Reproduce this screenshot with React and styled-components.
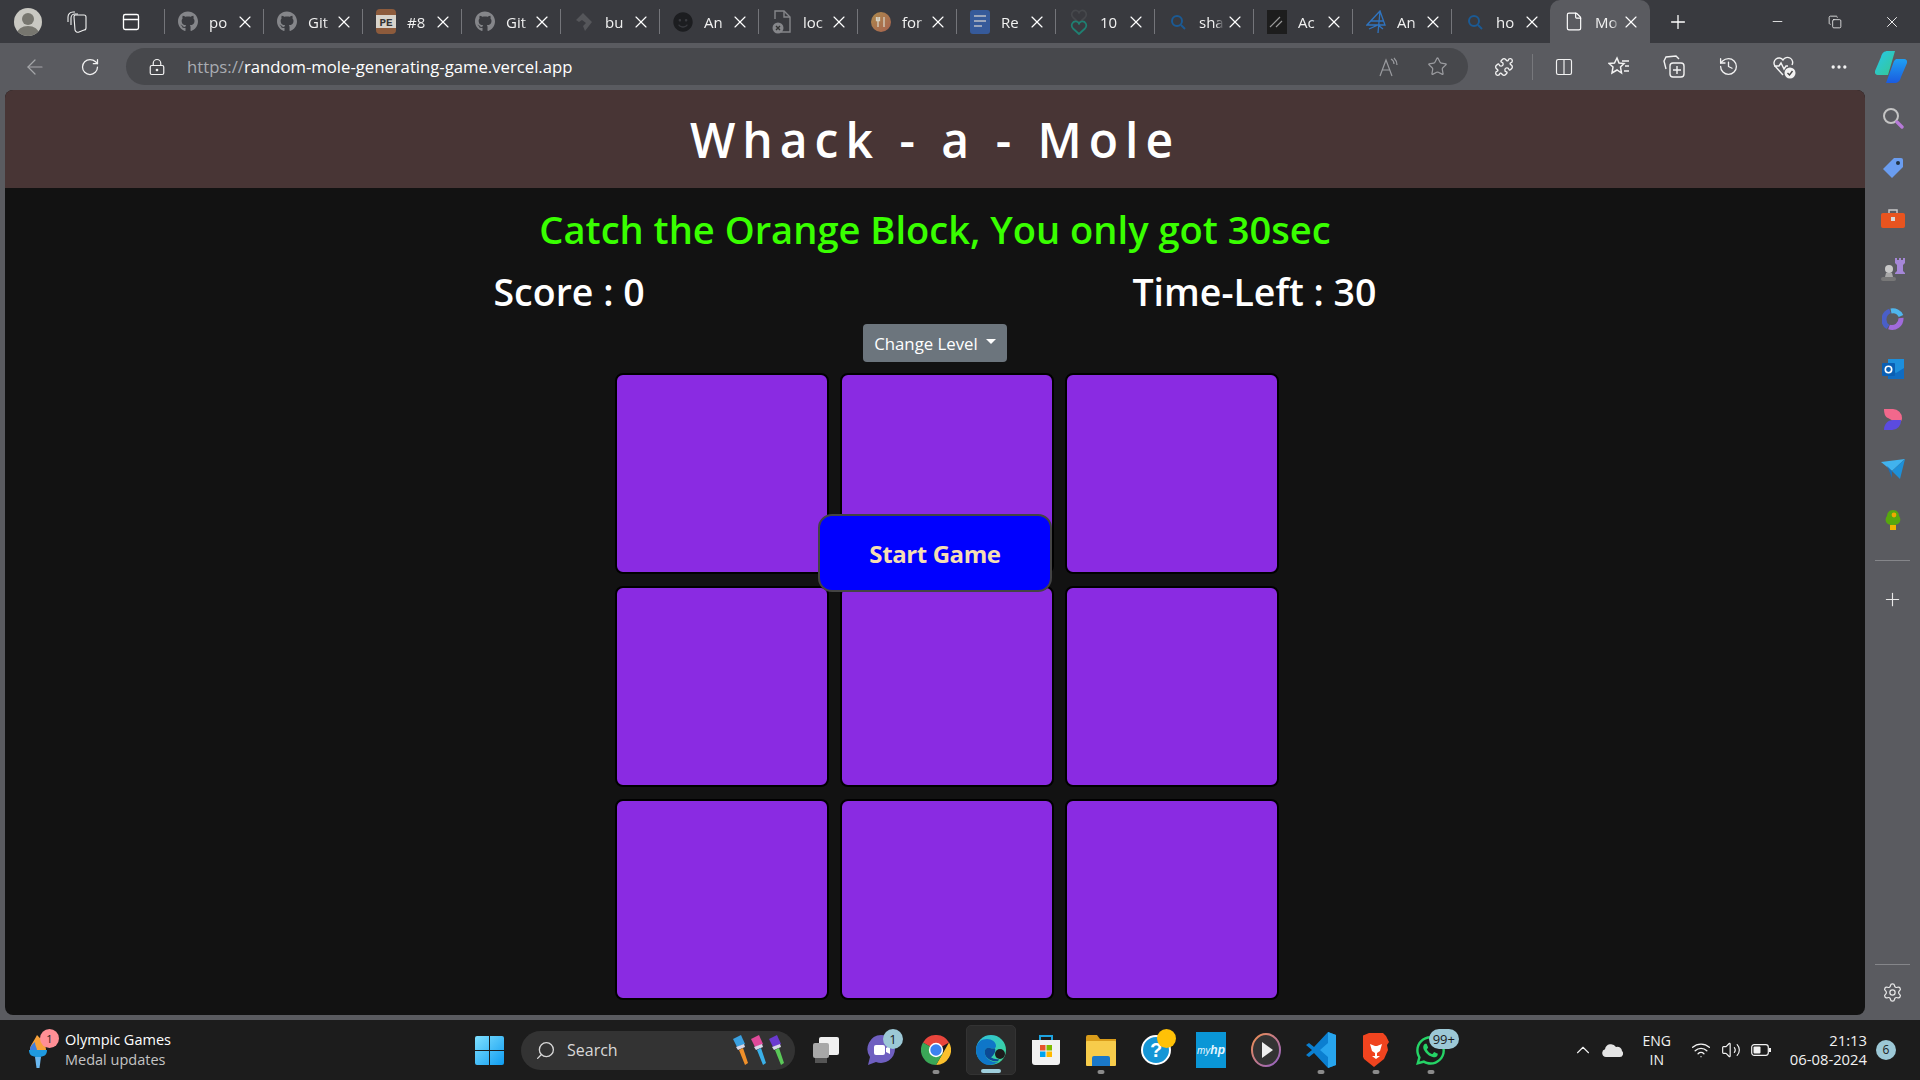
import React from "react";
import styled, { createGlobalStyle } from "styled-components";
import {
  ArrowLeft, RotateCw, LockKeyhole, Star, Puzzle, Columns2, History, Ellipsis, Plus, X, Minus,
  Copy, Search, Settings, ChevronUp, Wifi, Volume2, File, PanelTop,
} from "lucide-react";
import { FaGithub, FaSmile, FaWhatsapp } from "react-icons/fa";

const GlobalStyle = createGlobalStyle`
  html, body { margin: 0; padding: 0; background: #5a5b60; }
  * { box-sizing: border-box; }
  body { font-family: "Open Sans", "Noto Sans", sans-serif; overflow: hidden; }
`;

const Screen = styled.div`
  width: 1920px;
  height: 1080px;
  display: flex;
  flex-direction: column;
  overflow: hidden;
  background: #5a5b60;
`;

/* ---- browser tab strip ---- */
const TabStrip = styled.div`
  height: 43px;
  flex: none;
  display: flex;
  align-items: stretch;
  background: #393a3f;
  color: #fff;
`;

const StripSlot = styled.div`
  width: ${(p) => p.$w}px;
  flex: none;
  display: flex;
  align-items: center;
  justify-content: center;
`;

const Avatar = styled.div`
  width: 28px;
  height: 28px;
  border-radius: 50%;
  background: #c9c8c2;
  position: relative;
  overflow: hidden;
  &::before {
    content: "";
    position: absolute;
    left: 8px;
    top: 5px;
    width: 12px;
    height: 12px;
    border-radius: 50%;
    background: #77766f;
  }
  &::after {
    content: "";
    position: absolute;
    left: 3px;
    top: 18px;
    width: 22px;
    height: 16px;
    border-radius: 50%;
    background: #77766f;
  }
`;

const Tab = styled.div`
  width: ${(p) => (p.$active ? 100 : 99)}px;
  flex: none;
  display: flex;
  align-items: center;
  position: relative;
  padding-left: 14px;
  font-size: 15px;
  ${(p) =>
    p.$active
      ? `
    background: #5a5b60;
    border-radius: 10px 10px 0 0;
  `
      : `
    &::before {
      content: "";
      position: absolute;
      left: 0;
      top: 9px;
      height: 25px;
      width: 1px;
      background: #74757a;
    }
  `}
`;

const TabIcon = styled.span`
  width: 20px;
  height: 20px;
  flex: none;
  display: flex;
  align-items: center;
  justify-content: center;
`;

const TabTitle = styled.span`
  width: 25px;
  margin-left: 11px;
  flex: none;
  overflow: hidden;
  white-space: nowrap;
  color: #f2f2f2;
  font-size: 15px;
  -webkit-mask-image: linear-gradient(90deg, #000 65%, transparent);
  mask-image: linear-gradient(90deg, #000 65%, transparent);
`;

const TabClose = styled(X)`
  width: 20px;
  height: 20px;
  margin-left: 1px;
  flex: none;
  color: #fff;
`;

const WindowControls = styled.div`
  display: flex;
  margin-left: auto;
  color: #fff;
`;

/* ---- address bar row ---- */
const Toolbar = styled.div`
  height: 47px;
  flex: none;
  display: flex;
  align-items: center;
  padding-left: 12px;
  background: #5a5b60;
  color: #f2f2f2;
`;

const AddressBar = styled.div`
  width: 1342px;
  height: 37px;
  margin: 0 8px 0 4px;
  flex: none;
  display: flex;
  align-items: center;
  padding: 0 6px 0 20px;
  border-radius: 19px;
  background: #47484c;
`;

const Url = styled.div`
  margin-left: 19px;
  font-family: "Open Sans", sans-serif;
  font-size: 16.7px;
  color: #fff;
  white-space: nowrap;
  span {
    color: #a9acb2;
  }
`;

const BarEnd = styled.div`
  display: flex;
  margin-left: auto;
  color: #9a9b9f;
`;

const Divider = styled.div`
  width: 1px;
  height: 26px;
  flex: none;
  margin: 0 3px 0 1px;
  background: #77787c;
`;

/* ---- page + sidebar ---- */
const Middle = styled.div`
  flex: 1;
  min-height: 0;
  display: flex;
  padding: 0 0 5px 5px;
`;

const Page = styled.main`
  width: 1860px;
  flex: none;
  display: flex;
  flex-direction: column;
  align-items: center;
  overflow: hidden;
  border-radius: 8px;
  background: #121212;
  color: #fff;
  font-family: "Open Sans", "Noto Sans", sans-serif;
`;

const Header = styled.header`
  width: 100%;
  height: 98px;
  flex: none;
  display: flex;
  align-items: center;
  justify-content: center;
  padding-top: 2px;
  background: #483535;
`;

const Title = styled.h1`
  margin: 0;
  font-size: 48px;
  line-height: 58px;
  font-weight: 600;
  letter-spacing: 7px;
`;

const Subtitle = styled.h2`
  margin: 17px 0 0;
  font-size: 38.1px;
  line-height: 48px;
  font-weight: 600;
  color: #39ff00;
  white-space: nowrap;
`;

const ScoreRow = styled.div`
  width: 883px;
  margin-top: 15px;
  display: flex;
  justify-content: space-between;
`;

const ScoreText = styled.div`
  font-size: 37.5px;
  line-height: 48px;
  font-weight: 600;
  white-space: nowrap;
`;

const LevelButton = styled.button`
  width: 144px;
  height: 38px;
  margin-top: 8px;
  flex: none;
  display: flex;
  align-items: center;
  justify-content: center;
  gap: 8px;
  padding: 0;
  border: 0;
  border-radius: 4px;
  background: #6c757d;
  color: #fff;
  font-family: "Open Sans", sans-serif;
  font-size: 16.8px;
  &::after {
    content: "";
    border-top: 5px solid #fff;
    border-left: 5px solid transparent;
    border-right: 5px solid transparent;
    margin-top: -3px;
  }
`;

const Board = styled.div`
  position: relative;
  margin: 11px 0 0 24px;
  display: grid;
  grid-template-columns: repeat(3, 214px);
  grid-auto-rows: 201px;
  column-gap: 11px;
  row-gap: 12px;
`;

const Hole = styled.div`
  border: 2px solid #000;
  border-radius: 8px;
  background: #8a2be2;
`;

const StartButton = styled.button`
  position: absolute;
  left: 203px;
  top: 141px;
  width: 234px;
  height: 78px;
  border: 2px solid #444;
  border-radius: 14px;
  background: #0000ff;
  color: #f5deb3;
  font-family: "Open Sans", sans-serif;
  font-size: 24px;
  font-weight: 700;
  letter-spacing: -0.4px;
`;

const Sidebar = styled.aside`
  flex: 1;
  display: flex;
  flex-direction: column;
  align-items: center;
  padding-top: 3px;
  color: #e8e8e8;
`;

const SideSlot = styled.div`
  height: 50.2px;
  width: 100%;
  flex: none;
  display: flex;
  align-items: center;
  justify-content: center;
`;

const SideRule = styled.div`
  width: 35px;
  height: 1px;
  flex: none;
  margin: 15px 0 14px;
  background: #85868a;
`;

const SideBottom = styled.div`
  margin-top: auto;
  margin-bottom: -3px;
  width: 100%;
  display: flex;
  flex-direction: column;
  align-items: center;
  ${SideRule} {
    margin: 0 0 3px;
  }
`;

/* ---- windows taskbar ---- */
const Taskbar = styled.footer`
  height: 60px;
  flex: none;
  display: flex;
  align-items: center;
  background: #1c1c1c;
  color: #fff;
`;

const Widget = styled.div`
  width: 475px;
  flex: none;
  display: flex;
  align-items: center;
  gap: 9px;
  padding-left: 28px;
`;

const WidgetIcon = styled.div`
  position: relative;
  width: 28px;
  height: 36px;
  flex: none;
`;

const NotifyDot = styled.span`
  position: absolute;
  left: 12px;
  top: -3px;
  width: 19px;
  height: 19px;
  border-radius: 50%;
  background: #ff8f95;
  color: #222;
  font-size: 11px;
  line-height: 19px;
  text-align: center;
`;

const WidgetText = styled.div`
  font-size: 14.5px;
  line-height: 20px;
  white-space: nowrap;
  small {
    display: block;
    font-size: 14.5px;
    color: #c4c4c4;
  }
`;

const SearchPill = styled.div`
  width: 274px;
  height: 39px;
  margin: 0 3px 0 17px;
  flex: none;
  display: flex;
  align-items: center;
  gap: 11px;
  padding: 0 10px 0 14px;
  border-radius: 20px;
  background: #333;
  color: #d8d8d8;
  font-size: 16px;
`;

const Brushes = styled.div`
  margin-left: auto;
  display: flex;
  gap: 1px;
`;

const AppSlot = styled.div`
  position: relative;
  width: 55px;
  height: 50px;
  flex: none;
  display: flex;
  align-items: center;
  justify-content: center;
  border-radius: 5px;
  ${(p) => p.$focused && "width: 50px; margin: 0 2.5px; background: #2b2b2b; border: 1px solid #333;"}
  ${(p) =>
    p.$running &&
    `
    &::after {
      content: "";
      position: absolute;
      left: 50%;
      bottom: 1px;
      width: ${p.$focused ? 20 : 7}px;
      height: 4px;
      transform: translateX(-50%);
      border-radius: 2px;
      background: ${p.$focused ? "#9fcfdd" : "#8b8b8b"};
    }
  `}
`;

const CountBadge = styled.span`
  position: absolute;
  top: 4px;
  right: ${(p) => p.$right}px;
  height: 20px;
  min-width: 20px;
  padding: 0 4px;
  border-radius: 10px;
  background: #9cc8d6;
  color: #1a1a1a;
  font-size: 13px;
  line-height: 20px;
  text-align: center;
`;

const YellowDot = styled.span`
  position: absolute;
  top: 4px;
  right: 7px;
  width: 19px;
  height: 19px;
  border-radius: 50%;
  background: #ffc107;
`;

const Tray = styled.div`
  flex: 1;
  display: flex;
  align-items: center;
  justify-content: flex-end;
  color: #f2f2f2;
`;

const TraySlot = styled.div`
  width: ${(p) => p.$w}px;
  flex: none;
  display: flex;
  align-items: center;
  justify-content: center;
  text-align: center;
  font-size: 14px;
  line-height: 19px;
`;

const Clock = styled.div`
  margin-left: 14px;
  text-align: right;
  font-size: 14.8px;
  line-height: 19px;
  white-space: nowrap;
`;

const SixBadge = styled.div`
  width: 20px;
  height: 20px;
  margin: 0 24px 0 9px;
  flex: none;
  border-radius: 50%;
  background: #9cc8d6;
  color: #1a1a1a;
  font-size: 12px;
  line-height: 20px;
  text-align: center;
`;

/* ---- drawn logos ---- */
const Workspaces = () => (
  <svg width="22" height="24" viewBox="0 0 22 24" fill="none" stroke="#f2f2f2" strokeWidth="1.1">
    <path d="M2 12V7a5 5 0 0 1 5-5h2" />
    <path d="M5 15V8a4 4 0 0 1 4-4h3" />
    <path d="M9 5h9a2 2 0 0 1 2 2v11a2 2 0 0 1-2 2l-5 2a3 3 0 0 1-4-2l-1-13a2 2 0 0 1 1-2z" />
  </svg>
);

const Glass = ({ color = "#1b5a94" }) => (
  <svg width="18" height="18" viewBox="0 0 18 18" fill="none" stroke={color} strokeWidth="2">
    <circle cx="8" cy="8" r="5" />
    <path d="M12 12l4 4" />
  </svg>
);

const PeLogo = () => (
  <svg width="20" height="25" viewBox="0 0 20 25">
    <rect y="0" width="20" height="25" rx="4" fill="#8d5b3c" />
    <rect y="6" width="20" height="13" fill="#d8d3cb" />
    <text x="10" y="16.5" fontFamily="Liberation Mono" fontWeight="700" fontSize="11" textAnchor="middle" fill="#333">PE</text>
  </svg>
);

const Wing = () => (
  <svg width="20" height="22" viewBox="0 0 20 22" fill="#55565a">
    <path d="M2 9l7-7 9 9-7 9-2-5 3-3-4-3-3 2z" />
  </svg>
);

const DocBroken = () => (
  <svg width="20" height="25" viewBox="0 0 20 25" fill="none" stroke="#85868a" strokeWidth="1.4">
    <path d="M3 10V2h9l6 6v15H9" />
    <path d="M12 2v6h6" />
    <circle cx="6" cy="19" r="5.5" fill="#85868a" stroke="none" />
    <path d="M4 17l4 4M8 17l-4 4" stroke="#333" />
  </svg>
);

const FoodDot = () => (
  <svg width="20" height="20" viewBox="0 0 20 20">
    <defs>
      <linearGradient id="food" x1="0" y1="0" x2="1" y2="1">
        <stop offset="0" stopColor="#ad8a4d" />
        <stop offset="1" stopColor="#a8614e" />
      </linearGradient>
    </defs>
    <circle cx="10" cy="10" r="10" fill="url(#food)" />
    <path d="M7 5v10M5.5 5v3.5h3V5M13 5v10" stroke="#d6d2c4" strokeWidth="1.3" fill="none" />
  </svg>
);

const DocBlue = () => (
  <svg width="20" height="24" viewBox="0 0 20 24">
    <rect width="20" height="24" rx="3" fill="#365a9a" />
    <path d="M4 6h12M4 11h12M4 16h8" stroke="#9aa5bb" strokeWidth="2" />
  </svg>
);

const Hearts = () => (
  <svg width="20" height="26" viewBox="0 0 20 26" fill="none" strokeWidth="1.7" strokeLinejoin="round">
    <path d="M10 14L4 8.5C1 5 4 0.5 7.5 1.5 9 2 10 3 10 4c0-1 1-2 2.5-2.5C16 .5 19 5 16 8.5z" stroke="#46484c" />
    <path d="M10 25L4 19.5C1 16 4 11.5 7.5 12.5 9 13 10 14 10 15c0-1 1-2 2.5-2.5 3.500-1 6.500 3.500 3.500 7z" stroke="#1f8072" />
  </svg>
);

const DarkSquare = () => (
  <svg width="20" height="24" viewBox="0 0 20 24">
    <rect width="20" height="24" fill="#1d1d1d" />
    <path d="M3 17L13 7M9 17l6-6" stroke="#9a9a9a" strokeWidth="1.2" />
  </svg>
);

const BlueKite = () => (
  <svg width="20" height="24" viewBox="0 0 20 24" fill="none" stroke="#2f74c0" strokeWidth="1.3">
    <path d="M14 1L1 15h18zM14 1l-2 22M5 11h13M3 19l9-4 5 4" />
  </svg>
);

const Copilot = () => (
  <svg width="32" height="34" viewBox="0 0 32 34">
    <defs>
      <linearGradient id="cpa" x1="0" y1="0" x2="1" y2="1">
        <stop offset="0" stopColor="#25c7f0" />
        <stop offset="1" stopColor="#37c98d" />
      </linearGradient>
      <linearGradient id="cpb" x1="0" y1="0" x2="0" y2="1">
        <stop offset="0" stopColor="#1fa0f2" />
        <stop offset="1" stopColor="#1a5be0" />
      </linearGradient>
    </defs>
    <path d="M13 1h7l-7 24H3a3 3 0 0 1-3-4l6-14c1-4 3-6 7-6z" fill="url(#cpa)" />
    <path d="M21 9h8a3 3 0 0 1 3 4l-6 14c-1 4-3 6-7 6H11l8-22z" fill="url(#cpb)" />
  </svg>
);

const SideSearch = () => (
  <svg width="22" height="22" viewBox="0 0 22 22" fill="none">
    <circle cx="9" cy="9" r="7" stroke="#c4c4c4" strokeWidth="2" />
    <path d="M15 15l5 5" stroke="#b77ad8" strokeWidth="3.4" strokeLinecap="round" />
  </svg>
);

const TagIcon = () => (
  <svg width="22" height="22" viewBox="0 0 22 22">
    <path d="M12 1h7a2 2 0 0 1 2 2v7L10 21 1 12z" fill="#6a9df0" />
    <circle cx="16" cy="6" r="2" fill="#234" />
  </svg>
);

const ToolboxIcon = () => (
  <svg width="24" height="20" viewBox="0 0 24 20">
    <path d="M8 5V2h8v3" fill="none" stroke="#c9c9c9" strokeWidth="1.5" />
    <rect y="5" width="24" height="15" rx="2" fill="#e8541f" />
    <rect x="10" y="9" width="4" height="4" fill="#d8d8d8" />
  </svg>
);

const ChessIcon = () => (
  <svg width="24" height="24" viewBox="0 0 24 24">
    <path d="M14 1h2v2h2V1h2v2h2V1h2v5l-2 2v6l2 2v1H14v-1l2-2V8l-2-2z" fill="#a587d8" />
    <circle cx="8" cy="12" r="4" fill="#c8c8c8" />
    <path d="M5 16h6l1 4H4z" fill="#a8a8a8" />
    <rect y="20" width="15" height="4" rx="2" fill="#777" />
  </svg>
);

const SideCopilot = () => (
  <svg width="22" height="24" viewBox="0 0 22 24" fill="none" strokeWidth="5">
    <path d="M9 4a9 9 0 0 1 10 5" stroke="#4fb6ee" />
    <path d="M19 11a9 9 0 0 1-12 9" stroke="#a06bdc" />
    <path d="M6 20A9 9 0 0 1 8 4" stroke="#4a5fc8" />
  </svg>
);

const OutlookIcon = () => (
  <svg width="22" height="20" viewBox="0 0 22 20">
    <rect x="6" width="16" height="20" fill="#1d8fdc" />
    <path d="M6 9l8 5 8-5v11H6z" fill="#0f6cc2" />
    <rect y="4" width="13" height="13" rx="1" fill="#0a5fb4" />
    <circle cx="6.500" cy="10.500" r="3.200" fill="none" stroke="#fff" strokeWidth="1.600" />
  </svg>
);

const DesignerIcon = () => (
  <svg width="20" height="21" viewBox="0 0 20 21">
    <path d="M1 0h9a9 9 0 0 1 9 9c0 3-2 5-5 5L5 9C2 8 1 4 1 0z" fill="#f2688c" />
    <path d="M1 21c0-6 4-10 9-10h8a9 9 0 0 1-9 10z" fill="#5b4be0" />
  </svg>
);

const SendIcon = () => (
  <svg width="24" height="20" viewBox="0 0 24 20">
    <path d="M0 3l24-3-13 12z" fill="#41b3ee" />
    <path d="M24 0l-5 20-8-8z" fill="#1e90d8" />
    <path d="M6 7l5 5v7z" fill="#1c70b8" />
  </svg>
);

const TreeIcon = () => (
  <svg width="18" height="20" viewBox="0 0 18 20">
    <rect x="6" y="15" width="6" height="5" fill="#f0b400" />
    <path d="M9 0c4 0 6 3 6 6 2 2 3 9-6 9S1 8 3 6c0-3 2-6 6-6z" fill="#57a80e" />
    <circle cx="10" cy="5" r="2.400" fill="#f0a800" />
  </svg>
);

const Torch = () => (
  <svg width="20" height="36" viewBox="0 0 20 36" style={{ marginTop: 3 }}>
    <path d="M9 0c6 6 9 10 9 15H2C2 10 5 8 9 0z" fill="#f7a13a" />
    <path d="M2 15c0-4 3-6 5-8 0 4 2 6 2 8z" fill="#3d7fe0" />
    <path d="M1 15h18c0 5-3 7-9 7s-9-2-9-7z" fill="#1f9ae0" />
    <path d="M7 22h6l-1.500 11h-3z" fill="#6bb8f0" />
  </svg>
);

const Windows = () => (
  <svg width="29" height="29" viewBox="0 0 29 29">
    <defs>
      <linearGradient id="win" x1="0" y1="0" x2="1" y2="1">
        <stop offset="0" stopColor="#7fe0ff" />
        <stop offset="1" stopColor="#0f9cf0" />
      </linearGradient>
    </defs>
    <path d="M0 2a2 2 0 0 1 2-2h12v14H0zM15 0h12a2 2 0 0 1 2 2v12H15zM0 15h14v14H2a2 2 0 0 1-2-2zM15 15h14v12a2 2 0 0 1-2 2H15z" fill="url(#win)" />
  </svg>
);

const Brush = ({ head, handle }) => (
  <svg width="17" height="30" viewBox="0 0 17 30">
    <path d="M1 4l8-4 4 9-8 3z" fill={head} />
    <path d="M4 12l8-3 1 3-7 3z" fill="#d8d8e8" />
    <path d="M7 15l4-2 5 15-3 2z" fill={handle} />
  </svg>
);

const TaskView = () => (
  <svg width="26" height="26" viewBox="0 0 26 26">
    <rect x="6" y="0" width="20" height="18" rx="2" fill="#f0f0f0" />
    <rect x="0" y="6" width="16" height="15" rx="2" fill="#a8a8a8" />
    <rect x="2" y="21" width="12" height="5" fill="#555" />
  </svg>
);

const TeamsMeet = () => (
  <svg width="30" height="32" viewBox="0 0 30 32">
    <path d="M15 1a14 14 0 0 1 14 14 14 14 0 0 1-19 13l-8 3 2-8A14 14 0 0 1 15 1z" fill="#6f5fc0" />
    <rect x="8" y="11" width="11" height="10" rx="2" fill="#fff" />
    <path d="M20 14l4-2v8l-4-2z" fill="#fff" />
  </svg>
);

const Chrome = () => (
  <svg width="30" height="30" viewBox="-15 -15 30 30">
    <path d="M0-15A15 15 0 0 1 13 -7.500L0 -7.500Z M-13 -7.500A15 15 0 0 1 13 -7.500L0 0Z" fill="#e8453c" />
    <path d="M13-7.500A15 15 0 0 1 0 15L7 3Z" fill="#fbc02d" />
    <path d="M-13-7.500A15 15 0 0 0 0 15L7 3 0 0Z" fill="#3aa757" />
    <circle r="7.200" fill="#fff" />
    <circle r="5.700" fill="#3b82f0" />
  </svg>
);

const Edge = () => (
  <svg width="30" height="30" viewBox="0 0 30 30">
    <defs>
      <linearGradient id="edg" x1="0" y1="0" x2="1" y2="1">
        <stop offset="0" stopColor="#2fc2e0" />
        <stop offset="1" stopColor="#3dd68c" />
      </linearGradient>
    </defs>
    <circle cx="15" cy="15" r="15" fill="url(#edg)" />
    <path d="M0 15C0 7 6 4 11 4c5 0 9 3 9 7 0 3-4 3-6 2-4-1-6 2-5 6 1 5 7 9 13 8-3 2-6 3-9 3C6 30 0 23 0 15z" fill="#0f76c8" />
    <path d="M9 19c-1-4 1-7 5-6 2 .6 4 .8 5 .2 1 3-1 7-4 9 3 2 6 2 8 2l-1 2c-6 1-12-3-13-7z" fill="#0c4a94" />
    <circle cx="24" cy="19" r="5" fill="#1c1c1c" />
  </svg>
);

const Store = () => (
  <svg width="30" height="32" viewBox="0 0 30 32">
    <path d="M9 7V2h12v5" fill="none" stroke="#1ea4e0" strokeWidth="2" />
    <path d="M1 6h28v22a3 3 0 0 1-3 3H4a3 3 0 0 1-3-3z" fill="#f2f2f2" />
    <rect x="9" y="11" width="5.500" height="5.500" fill="#e8532c" />
    <rect x="15.500" y="11" width="5.500" height="5.500" fill="#7fba00" />
    <rect x="9" y="17.500" width="5.500" height="5.500" fill="#00a4ef" />
    <rect x="15.500" y="17.500" width="5.500" height="5.500" fill="#ffb900" />
  </svg>
);

const Folder = () => (
  <svg width="30" height="32" viewBox="0 0 30 32">
    <path d="M0 3a2 2 0 0 1 2-2h9l3 4h16v6H0z" fill="#d99c1a" />
    <rect y="7" width="30" height="25" rx="1" fill="#f7cc4b" />
    <path d="M6 24a2 2 0 0 1 2-2h14a2 2 0 0 1 2 2v8H6z" fill="#1a78c8" />
  </svg>
);

const HelpRound = () => (
  <svg width="30" height="32" viewBox="0 0 30 32">
    <circle cx="15" cy="16" r="14" fill="#1596d6" stroke="#fff" strokeWidth="2" />
    <text x="15" y="23" textAnchor="middle" fontFamily="Liberation Sans" fontWeight="700" fontSize="20" fill="#fff">?</text>
  </svg>
);

const MyHp = () => (
  <svg width="30" height="36" viewBox="0 0 30 36">
    <rect width="30" height="36" fill="#0a96d6" />
    <text x="15" y="22" textAnchor="middle" fontFamily="Liberation Sans" fontStyle="italic" fontSize="10" fill="#e6f6ff">my<tspan fontWeight="700" fontSize="12">hp</tspan></text>
  </svg>
);

const PlayRound = () => (
  <svg width="30" height="34" viewBox="0 0 30 34">
    <defs>
      <linearGradient id="ply" x1="0" y1="0" x2="1" y2="1">
        <stop offset="0" stopColor="#f09050" />
        <stop offset="1" stopColor="#9060c8" />
      </linearGradient>
    </defs>
    <ellipse cx="15" cy="17" rx="14" ry="16" fill="#333" stroke="url(#ply)" strokeWidth="2" />
    <path d="M11 9l11 8-11 8z" fill="#eee" />
  </svg>
);

const VsCode = () => (
  <svg width="30" height="36" viewBox="0 0 30 36">
    <path d="M22 0l8 3v30l-8 3L8 21l-5 4-3-2 6-5-6-5 3-2 5 4z" fill="#0b7fd0" />
    <path d="M22 0l8 3v30l-8 3V25l-8-7 8-7z" fill="#27a5ee" />
  </svg>
);

const Brave = () => (
  <svg width="26" height="34" viewBox="0 0 26 34">
    <path d="M6 0h14l3 3 3 6-2 3 1 5-4 9-10 8-10-8-4-9 1-5-2-3 3-6z" fill="#f0441f" />
    <path d="M7 11l5 2h2l5-2-2 7-3 2v3h3l-4 3-4-3h3v-3l-3-2z" fill="#fff" />
  </svg>
);

/* ---- data ---- */
const GH = <FaGithub size={21} color="#85868a" />;
const tabs = [
  { icon: GH, title: "po" },
  { icon: GH, title: "Git" },
  { icon: <PeLogo />, title: "#8" },
  { icon: GH, title: "Git" },
  { icon: <Wing />, title: "bu" },
  { icon: <FaSmile size={20} color="#1c1d20" />, title: "An" },
  { icon: <DocBroken />, title: "loc" },
  { icon: <FoodDot />, title: "for" },
  { icon: <DocBlue />, title: "Re" },
  { icon: <Hearts />, title: "10" },
  { icon: <Glass />, title: "sha" },
  { icon: <DarkSquare />, title: "Ac" },
  { icon: <BlueKite />, title: "An" },
  { icon: <Glass />, title: "ho" },
];

const sideIcons = [
  <SideSearch key="s" />,
  <TagIcon key="t" />,
  <ToolboxIcon key="b" />,
  <ChessIcon key="c" />,
  <SideCopilot key="p" />,
  <OutlookIcon key="o" />,
  <DesignerIcon key="d" />,
  <SendIcon key="e" />,
  <TreeIcon key="r" />,
];

const apps = [
  { icon: <TaskView /> },
  { icon: <TeamsMeet />, badge: "1", right: 5 },
  { icon: <Chrome />, running: true },
  { icon: <Edge />, running: true, focused: true },
  { icon: <Store /> },
  { icon: <Folder />, running: true },
  { icon: <HelpRound />, dot: true },
  { icon: <MyHp /> },
  { icon: <PlayRound /> },
  { icon: <VsCode />, running: true },
  { icon: <Brave />, running: true },
  { icon: <FaWhatsapp size={33} color="#25d366" />, running: true, badge: "99+", right: -1 },
];

const App = () => (
  <Screen>
    <GlobalStyle />
    <TabStrip>
      <StripSlot $w={56}><Avatar /></StripSlot>
      <StripSlot $w={42}><Workspaces /></StripSlot>
      <StripSlot $w={66}><PanelTop size={20} strokeWidth={1.6} /></StripSlot>
      {tabs.map((tab, i) => (
        <Tab key={i}>
          <TabIcon>{tab.icon}</TabIcon>
          <TabTitle>{tab.title}</TabTitle>
          <TabClose strokeWidth={1.4} />
        </Tab>
      ))}
      <Tab $active>
        <TabIcon><File size={21} strokeWidth={1.4} /></TabIcon>
        <TabTitle>Mo</TabTitle>
        <TabClose strokeWidth={1.4} />
      </Tab>
      <StripSlot $w={56}><Plus size={22} strokeWidth={1.4} /></StripSlot>
      <WindowControls>
        <StripSlot $w={57}><Minus size={15} strokeWidth={1.3} /></StripSlot>
        <StripSlot $w={57}><Copy size={14} strokeWidth={1.3} /></StripSlot>
        <StripSlot $w={57}><X size={18} strokeWidth={1.2} /></StripSlot>
      </WindowControls>
    </TabStrip>

    <Toolbar>
      <StripSlot $w={46}><ArrowLeft size={24} strokeWidth={1.2} color="#a5a6a9" /></StripSlot>
      <StripSlot $w={64}><RotateCw size={20} strokeWidth={1.5} /></StripSlot>
      <AddressBar>
        <StripSlot $w={22}><LockKeyhole size={18} strokeWidth={1.6} /></StripSlot>
        <Url><span>https://</span>random-mole-generating-game.vercel.app</Url>
        <BarEnd>
          <StripSlot $w={49}>
            <svg width="20" height="20" viewBox="0 0 20 20" fill="none" stroke="#9a9b9f" strokeWidth="1.2">
              <path d="M1 19L7 3l6 16M3 13h8M12 2c2 1 3 3 3 5M15 1c2 2 3 4 3 7" />
            </svg>
          </StripSlot>
          <StripSlot $w={49}><Star size={21} strokeWidth={1.4} /></StripSlot>
        </BarEnd>
      </AddressBar>
      <StripSlot $w={55}><Puzzle size={20} strokeWidth={1.6} /></StripSlot>
      <Divider />
      <StripSlot $w={55}><Columns2 size={20} strokeWidth={1.4} /></StripSlot>
      <StripSlot $w={55}>
        <svg width="22" height="22" viewBox="0 0 22 22" fill="none" stroke="currentColor" strokeWidth="1.5">
          <path d="M9 2l2 5 5 .5-3.500 3.500 1 6L9 14l-5 3 1-6L1 7.500 6.500 7zM14 5h7M17 10h4M16 15h5" />
        </svg>
      </StripSlot>
      <StripSlot $w={55}>
        <svg width="22" height="24" viewBox="0 0 22 24" fill="none" stroke="currentColor" strokeWidth="1.4">
          <path d="M3 14L1 6l2-4 10-1 3 3" />
          <rect x="7" y="8" width="14" height="14" rx="3" />
          <path d="M14 11v8M10 15h8" />
        </svg>
      </StripSlot>
      <StripSlot $w={55}><History size={21} strokeWidth={1.5} /></StripSlot>
      <StripSlot $w={55}>
        <svg width="24" height="24" viewBox="0 0 24 24" fill="none" stroke="currentColor" strokeWidth="1.4">
          <path d="M11 20L3 11a5 5 0 0 1 8-6 5 5 0 0 1 9 5M2 11h5l2-3 3 6 2-3h2" />
          <circle cx="18" cy="18" r="5.500" fill="#f2f2f2" stroke="none" />
          <path d="M15.500 18l2 2 3-4" stroke="#444" />
        </svg>
      </StripSlot>
      <StripSlot $w={55}><Ellipsis size={20} /></StripSlot>
      <StripSlot $w={49}><Copilot /></StripSlot>
    </Toolbar>

    <Middle>
      <Page>
        <Header>
          <Title>Whack - a - Mole</Title>
        </Header>
        <Subtitle>Catch the Orange Block, You only got 30sec</Subtitle>
        <ScoreRow>
          <ScoreText>Score : 0</ScoreText>
          <ScoreText>Time-Left : 30</ScoreText>
        </ScoreRow>
        <LevelButton>Change Level</LevelButton>
        <Board>
          {Array.from({ length: 9 }, (_, i) => (
            <Hole key={i} />
          ))}
          <StartButton>Start Game</StartButton>
        </Board>
      </Page>
      <Sidebar>
        {sideIcons.map((icon, i) => (
          <SideSlot key={i}>{icon}</SideSlot>
        ))}
        <SideRule />
        <SideSlot><Plus size={21} strokeWidth={1.3} /></SideSlot>
        <SideBottom>
          <SideRule />
          <SideSlot><Settings size={21} strokeWidth={1.4} /></SideSlot>
        </SideBottom>
      </Sidebar>
    </Middle>

    <Taskbar>
      <Widget>
        <WidgetIcon>
          <Torch />
          <NotifyDot>1</NotifyDot>
        </WidgetIcon>
        <WidgetText>
          Olympic Games
          <small>Medal updates</small>
        </WidgetText>
      </Widget>
      <Windows />
      <SearchPill>
        <Search size={21} strokeWidth={1.5} style={{ transform: "scaleX(-1)" }} />
        Search
        <Brushes>
          <Brush head="#3aa0e0" handle="#f0902a" />
          <Brush head="#e04a9a" handle="#3ab0e8" />
          <Brush head="#6a3ad0" handle="#5ac858" />
        </Brushes>
      </SearchPill>
      {apps.map((app, i) => (
        <AppSlot key={i} $running={app.running} $focused={app.focused}>
          {app.icon}
          {app.badge && <CountBadge $right={app.right}>{app.badge}</CountBadge>}
          {app.dot && <YellowDot />}
        </AppSlot>
      ))}
      <Tray>
        <TraySlot $w={30}><ChevronUp size={22} strokeWidth={1.2} /></TraySlot>
        <TraySlot $w={30}>
          <svg width="21" height="14" viewBox="0 0 21 14">
            <path d="M4 14a4 4 0 0 1-1-7.800A6 6 0 0 1 14 4a4.500 4.500 0 0 1 6 4 3.500 3.500 0 0 1-2 6z" fill="#e4e4e4" />
          </svg>
        </TraySlot>
        <TraySlot $w={58}>ENG<br />IN</TraySlot>
        <TraySlot $w={30}><Wifi size={20} strokeWidth={1.6} /></TraySlot>
        <TraySlot $w={30}><Volume2 size={20} strokeWidth={1.4} /></TraySlot>
        <TraySlot $w={30}>
          <svg width="20" height="12" viewBox="0 0 20 12" fill="none">
            <rect x=".7" y=".7" width="16.600" height="10.600" rx="2.500" stroke="#f2f2f2" strokeWidth="1.200" />
            <rect x="2.500" y="2.500" width="7" height="7" rx="1" fill="#f2f2f2" />
            <rect x="18" y="4" width="2" height="4" fill="#f2f2f2" />
          </svg>
        </TraySlot>
        <Clock>21:13<br />06-08-2024</Clock>
        <SixBadge>6</SixBadge>
      </Tray>
    </Taskbar>
  </Screen>
);

export default App;
